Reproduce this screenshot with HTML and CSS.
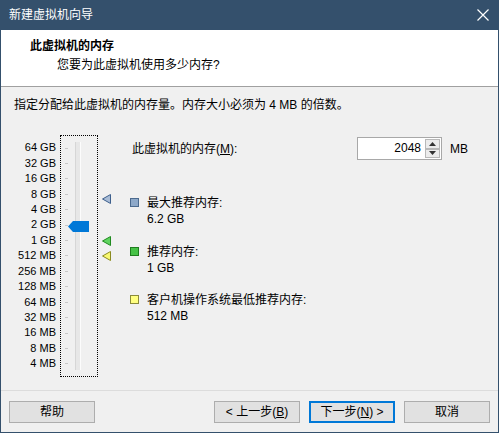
FILE: index.html
```html
<!DOCTYPE html>
<html lang="zh-CN">
<head>
<meta charset="utf-8">
<title>新建虚拟机向导</title>
<link rel="stylesheet" href="styles.css">
</head>
<body>
<div class="window">
  <div class="titlebar">
    <span class="title">新建虚拟机向导</span>
    <svg class="close" width="12" height="12" viewBox="0 0 12 12"><path d="M0.5 0.5 L11.5 11.5 M11.5 0.5 L0.5 11.5" stroke="#fff" stroke-width="1.2"/></svg>
  </div>
  <div class="header">
    <div class="h-title">此虚拟机的内存</div>
    <div class="h-sub">您要为此虚拟机使用多少内存?</div>
  </div>
  <div class="content">
    <p class="intro">指定分配给此虚拟机的内存量。内存大小必须为 4 MB 的倍数。</p>
    <div class="main">
      <div class="scale">
        <span>64 GB</span><span>32 GB</span><span>16 GB</span><span>8 GB</span><span>4 GB</span><span>2 GB</span><span>1 GB</span><span>512 MB</span><span>256 MB</span><span>128 MB</span><span>64 MB</span><span>32 MB</span><span>16 MB</span><span>8 MB</span><span>4 MB</span>
      </div>
      <div class="slider">
        <div class="ticks">
          <i></i><i></i><i></i><i></i><i></i><i></i><i></i><i></i><i></i><i></i><i></i><i></i><i></i><i></i><i></i>
        </div>
        <div class="track"></div>
        <svg class="thumb" width="21" height="11" viewBox="0 0 21 11"><path d="M0 5.5 L5 0 H21 V11 H5 Z" fill="#0078d7"/></svg>
      </div>
      <div class="markers">
        <svg class="mk mk-max" width="9" height="10" viewBox="0 0 9 10"><path d="M0.5 5 L8.5 0.5 V9.5 Z" fill="#a9bcd6" stroke="#3d5f8c"/></svg>
        <svg class="mk mk-rec" width="9" height="10" viewBox="0 0 9 10"><path d="M0.5 5 L8.5 0.5 V9.5 Z" fill="#5fd35f" stroke="#1f8a1f"/></svg>
        <svg class="mk mk-min" width="9" height="10" viewBox="0 0 9 10"><path d="M0.5 5 L8.5 0.5 V9.5 Z" fill="#f8f870" stroke="#8a8a20"/></svg>
      </div>
      <div class="panel">
        <div class="mem-row">
          <span class="mem-label">此虚拟机的内存(<u>M</u>):</span>
          <div class="spin">
            <span class="spin-value">2048</span>
            <div class="spin-btns">
              <span class="sb"><svg width="7" height="4" viewBox="0 0 7 4"><path d="M0 4 L3.5 0 L7 4 Z" fill="#333"/></svg></span>
              <span class="sb"><svg width="7" height="4" viewBox="0 0 7 4"><path d="M0 0 L3.5 4 L7 0 Z" fill="#333"/></svg></span>
            </div>
          </div>
          <span class="unit">MB</span>
        </div>
        <div class="legend">
          <div class="item">
            <span class="sq sq-max"></span>
            <div class="item-text"><div>最大推荐内存:</div><div>6.2 GB</div></div>
          </div>
          <div class="item">
            <span class="sq sq-rec"></span>
            <div class="item-text"><div>推荐内存:</div><div>1 GB</div></div>
          </div>
          <div class="item">
            <span class="sq sq-min"></span>
            <div class="item-text"><div>客户机操作系统最低推荐内存:</div><div>512 MB</div></div>
          </div>
        </div>
      </div>
    </div>
  </div>
  <div class="footer">
    <button class="btn">帮助</button>
    <div class="spacer"></div>
    <button class="btn">&lt; 上一步(<u>B</u>)</button>
    <button class="btn btn-default">下一步(<u>N</u>) &gt;</button>
    <button class="btn">取消</button>
  </div>
</div>
</body>
</html>
```
FILE: styles.css
```css
* { box-sizing: border-box; }
html, body { margin: 0; padding: 0; }
body {
  width: 499px;
  height: 433px;
  background: #f0f0f0;
  font-family: "Liberation Sans", "Noto Sans CJK SC", sans-serif;
  font-size: 12px;
  color: #000;
  overflow: hidden;
}
.window {
  width: 499px;
  height: 433px;
  border: 1px solid #34506c;
  border-top: none;
  display: flex;
  flex-direction: column;
  background: #f0f0f0;
}
.titlebar {
  height: 30px;
  margin: 0 -1px;
  background: #34506c;
  display: flex;
  align-items: center;
  justify-content: space-between;
  padding: 0 10px 0 9px;
  color: #fff;
  flex: none;
}
.title { font-size: 12px; line-height: 16px; }
.close { display: block; }
.header {
  height: 57px;
  background: #fff;
  border-bottom: 1px solid #a0a0a0;
  padding-top: 8px;
  flex: none;
}
.h-title {
  font-weight: bold;
  line-height: 16px;
  padding-left: 29px;
}
.h-sub {
  line-height: 16px;
  margin-top: 3px;
  padding-left: 56px;
}
.content {
  flex: 1;
  padding-top: 10px;
}
.intro {
  margin: 0;
  padding-left: 13px;
  line-height: 16px;
}
.main {
  display: flex;
  margin-top: 22px;
  height: 242px;
}
.scale {
  width: 55px;
  display: flex;
  flex-direction: column;
  align-items: flex-end;
  padding-top: 5.3px;
  margin-right: 4px;
  font-size: 11px;
  color: #000;
}
.scale span {
  height: 15.43px;
  line-height: 15.43px;
  white-space: nowrap;
}
.slider {
  position: relative;
  width: 38px;
  height: 242px;
  border: 1px dotted #000;
  display: flex;
  flex: none;
}
.ticks {
  display: flex;
  flex-direction: column;
  padding-top: 4.3px;
  padding-left: 4px;
  width: 14px;
}
.ticks i {
  height: 15.43px;
  display: flex;
  align-items: center;
}
.ticks i::before {
  content: "";
  width: 3px;
  height: 1px;
  background: #c8c8c8;
}
.track {
  margin-top: 6px;
  width: 6px;
  height: 228px;
  background: #e7e7e7;
  border-left: 1px solid #d6d6d6;
  border-right: 1px solid #fcfcfc;
}
.thumb {
  position: absolute;
  left: 7px;
  top: 85px;
}
.markers {
  position: relative;
  width: 32px;
  flex: none;
}
.mk { position: absolute; left: 4px; display: block; }
.mk-max { top: 59px; }
.mk-rec { top: 101px; }
.mk-min { top: 116px; }
.panel {
  flex: 1;
  padding-top: 2px;
}
.mem-row {
  display: flex;
  align-items: center;
  height: 23px;
}
.mem-label {
  padding-left: 2px;
  width: 227px;
  line-height: 16px;
}
.mem-label u, .btn u { text-decoration: underline; text-underline-offset: 1px; }
.spin {
  display: flex;
  height: 23px;
}
.spin-value {
  width: 68px;
  height: 23px;
  background: #fff;
  border: 1px solid #a8a8a8;
  border-right: none;
  text-align: right;
  padding-right: 4px;
  line-height: 21px;
}
.spin-btns {
  width: 17px;
  height: 23px;
  background: #fff;
  border: 1px solid #a8a8a8;
  border-left: none;
  display: flex;
  flex-direction: column;
  padding: 1px 1px 1px 0;
}
.sb {
  flex: 1;
  background: #ececec;
  border: 1px solid #b8b8b8;
  display: flex;
  align-items: center;
  justify-content: center;
}
.sb svg { display: block; }
.unit { margin-left: 8px; line-height: 16px; }
.legend {
  margin-top: 35px;
  display: flex;
  flex-direction: column;
  gap: 16.5px;
}
.item {
  display: flex;
  align-items: flex-start;
}
.sq {
  width: 9px;
  height: 9px;
  margin-top: 3px;
  margin-right: 8px;
  flex: none;
}
.sq-max { background: #8ea9c9; border: 1px solid #4b6a8e; }
.sq-rec { background: #46c246; border: 1px solid #1f7d1f; }
.sq-min { background: #ffff80; border: 1px solid #8a8a3a; }
.item-text div { line-height: 16px; }
.footer {
  height: 42px;
  flex: none;
  display: flex;
  align-items: flex-start;
  padding: 10px 8px 0 8px;
  border-top: 1px solid #dcdcdc;
}
.spacer { flex: 1; }
.btn {
  width: 86px;
  height: 22px;
  font: inherit;
  font-size: 12px;
  background: #e1e1e1;
  border: 1px solid #adadad;
  padding: 0;
  color: #000;
  line-height: 18px;
  border-radius: 0;
}
.btn + .btn { margin-left: 9px; }
.btn-default {
  border: 1px solid #0078d7;
  box-shadow: inset 0 0 0 1px #0078d7;
}
```
